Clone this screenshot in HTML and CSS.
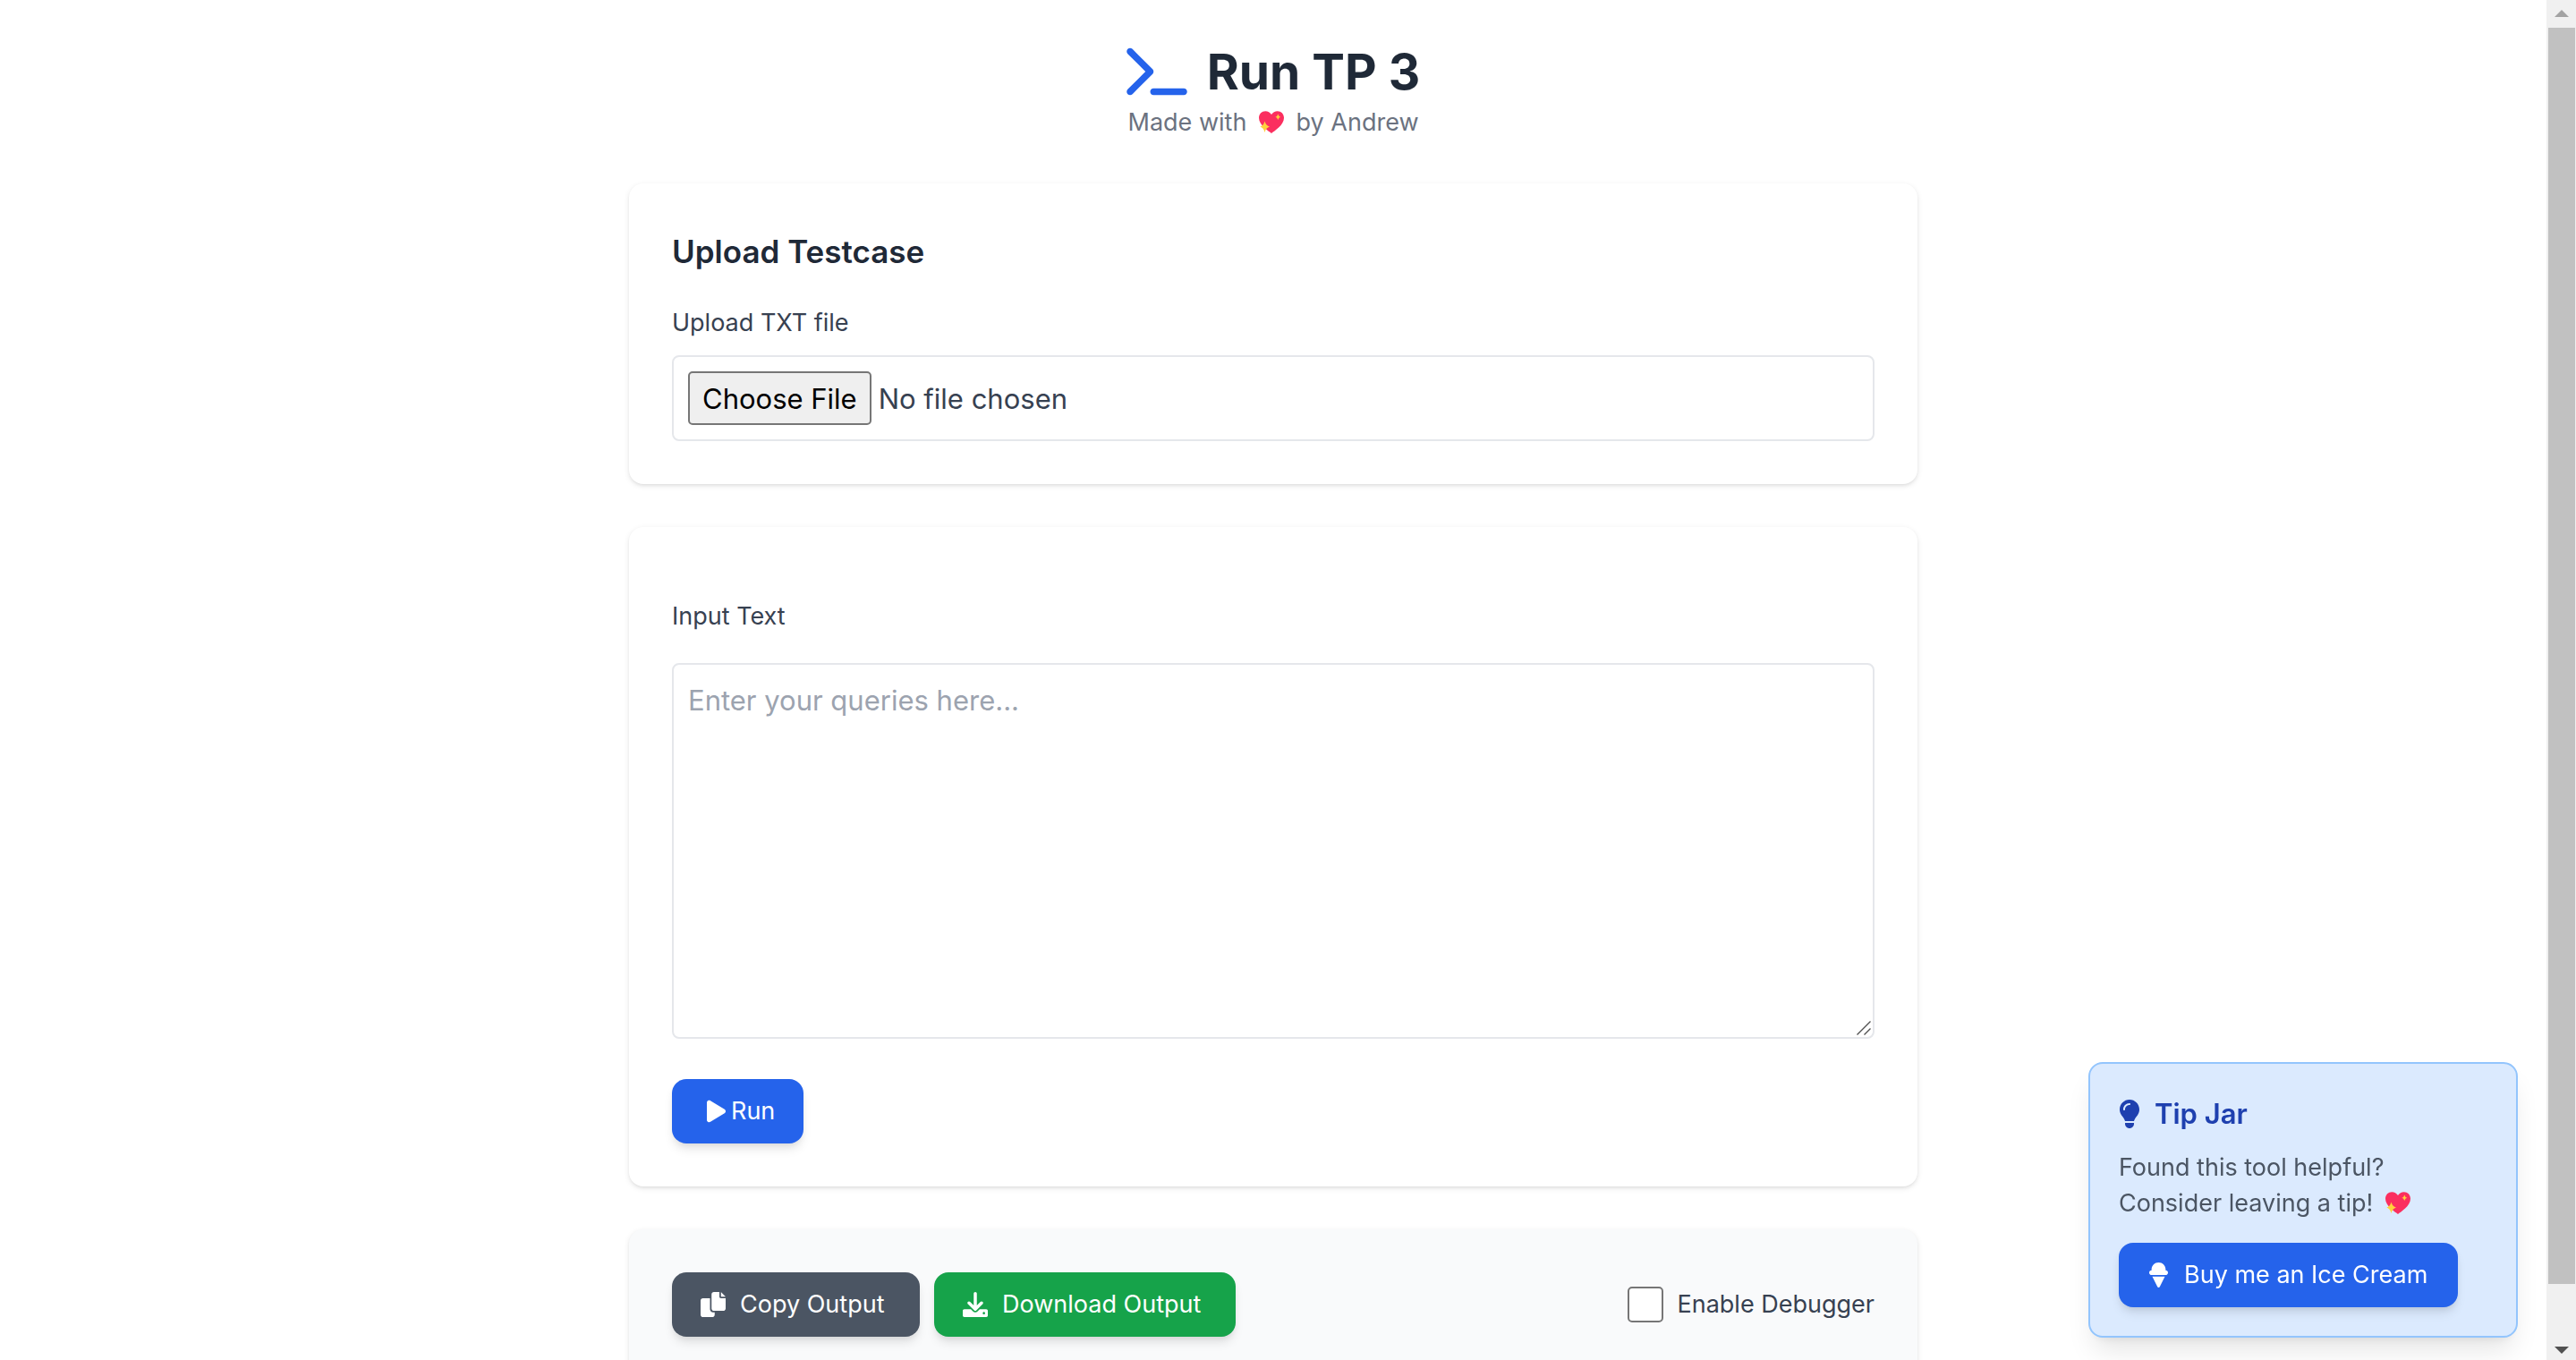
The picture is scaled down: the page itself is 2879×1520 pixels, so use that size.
FILE: index.html
```html
<!DOCTYPE html>
<html lang="en">
<head>
<meta charset="utf-8">
<title>Run TP 3</title>
<link rel="stylesheet" href="styles.css">
</head>
<body>
<svg class="sprite" aria-hidden="true">
  <symbol id="sparkling-heart" viewBox="0 0 28 25">
    <path fill="#fb2f5f" d="M14 25C11 22.600 0 16 0 7.800C0 3.400 3.200 .3 7.300 .3C10 .3 12.500 1.700 14 4C15.500 1.700 18 .3 20.700 .3C24.800 .3 28 3.400 28 7.800C28 16 17 22.600 14 25Z"/>
    <path fill="#ffd23c" d="M6.500 11.500Q7.800 16.300 12 17.600Q7.800 18.900 6.500 24Q5.200 18.900 1.400 17.600Q5.200 16.300 6.500 11.500ZM21.300 3.400Q22 6.100 24.200 6.700Q22 7.300 21.300 10Q20.600 7.300 18.400 6.700Q20.600 6.100 21.300 3.400Z"/>
  </symbol>
</svg>
<main class="page">
  <header class="header">
    <h1 class="title">
      <svg class="title-icon" viewBox="0 0 576 512" aria-hidden="true"><path d="M9.400 86.600C-3.100 74.100-3.100 53.900 9.400 41.400s32.800-12.500 45.300 0l192 192c12.500 12.500 12.500 32.800 0 45.300l-192 192c-12.500 12.500-32.800 12.500-45.300 0s-12.500-32.800 0-45.300L178.700 256 9.400 86.600zM256 416H544c17.700 0 32 14.300 32 32s-14.300 32-32 32H256c-17.700 0-32-14.300-32-32s14.300-32 32-32z"/></svg>
      Run TP 3
    </h1>
    <p class="subtitle">Made with <svg class="heart" role="img" aria-label="sparkling heart"><use href="#sparkling-heart"/></svg> by Andrew</p>
  </header>

  <section class="card">
    <h2 class="card-title">Upload Testcase</h2>
    <label class="label" for="testcase">Upload TXT file</label>
    <input class="file" type="file" id="testcase" accept=".txt">
  </section>

  <section class="card">
    <label class="label label-spaced" for="queries">Input Text</label>
    <div class="queries-box">
      <textarea class="queries" id="queries" placeholder="Enter your queries here..."></textarea>
      <svg class="grip" viewBox="0 0 16 16" aria-hidden="true"><path d="M.5 15.500L15.500 .5M8.500 15.500L15.500 8.500"/></svg>
    </div>
    <button class="button button-run" type="button">
      <svg class="icon-play" viewBox="0 0 384 512" aria-hidden="true"><path d="M73 39c-14.800-9.100-33.400-9.400-48.500-.9S0 62.600 0 80V432c0 17.400 9.400 33.400 24.500 41.900s33.700 8.100 48.500-.9L361 297c14.300-8.700 23-24.200 23-41s-8.700-32.200-23-41L73 39z"/></svg>
      Run
    </button>
  </section>

  <section class="card card-output">
    <div class="toolbar">
      <button class="button button-copy" type="button">
        <svg class="icon" viewBox="0 0 512 512" aria-hidden="true"><path d="M384 96L384 0h-112c-26.510 0-48 21.490-48 48v288c0 26.510 21.490 48 48 48H464c26.510 0 48-21.490 48-48V128h-95.100C398.400 128 384 113.600 384 96zM416 0v96h96L416 0zM192 352V128h-144c-26.510 0-48 21.490-48 48v288c0 26.510 21.490 48 48 48h192c26.510 0 48-21.490 48-48L288 416h-32C220.700 416 192 387.300 192 352z"/></svg>
        Copy Output
      </button>
      <button class="button button-download" type="button">
        <svg class="icon" viewBox="0 0 512 512" aria-hidden="true"><path d="M480 352h-133.500l-45.250 45.250C289.200 409.300 273.100 416 256 416s-33.160-6.656-45.250-18.750L165.500 352H32c-17.670 0-32 14.330-32 32v96c0 17.670 14.330 32 32 32h448c17.670 0 32-14.330 32-32v-96C512 366.300 497.700 352 480 352zM432 456c-13.200 0-24-10.800-24-24c0-13.200 10.800-24 24-24s24 10.800 24 24C456 445.200 445.200 456 432 456zM233.400 374.600C239.600 380.900 247.800 384 256 384s16.380-3.125 22.620-9.375l128-128c12.490-12.500 12.490-32.750 0-45.250c-12.500-12.500-32.760-12.500-45.250 0L288 274.800V32c0-17.670-14.330-32-32-32C238.300 0 224 14.330 224 32v242.800L150.600 201.400c-12.490-12.500-32.750-12.500-45.250 0c-12.490 12.500-12.490 32.750 0 45.250L233.400 374.600z"/></svg>
        Download Output
      </button>
      <label class="debugger"><input class="checkbox" type="checkbox">Enable Debugger</label>
    </div>
  </section>
</main>

<aside class="tip">
  <h3 class="tip-title">
    <svg class="tip-icon" viewBox="0 0 384 512" aria-hidden="true"><path d="M272 384c9.600-31.900 29.500-59.100 49.200-86.200l0 0c5.200-7.100 10.400-14.200 15.400-21.400c19.800-28.500 31.400-63 31.400-100.300C368 78.800 289.200 0 192 0S16 78.800 16 176c0 37.300 11.600 71.900 31.400 100.300c5 7.200 10.200 14.300 15.400 21.400l0 0c19.800 27.100 39.700 54.400 49.200 86.200H272zM192 512c44.200 0 80-35.800 80-80V416H112v16c0 44.200 35.800 80 80 80zM112 176c0 8.800-7.200 16-16 16s-16-7.200-16-16c0-61.900 50.100-112 112-112c8.800 0 16 7.200 16 16s-7.200 16-16 16c-44.200 0-80 35.800-80 80z"/></svg>
    Tip Jar
  </h3>
  <p class="tip-text">Found this tool helpful?<br>Consider leaving a tip! <svg class="heart heart-tip" role="img" aria-label="sparkling heart"><use href="#sparkling-heart"/></svg></p>
  <a class="button button-tip" href="#tip">
    <svg class="icon-cone" viewBox="0 0 448 512" aria-hidden="true"><path d="M367.100 160c.6-5.300 .9-10.600 .9-16C368 64.500 303.500 0 224 0S80 64.500 80 144c0 5.400 .3 10.700 .9 16H80c-26.500 0-48 21.500-48 48s21.500 48 48 48H368c26.500 0 48-21.500 48-48s-21.500-48-48-48h-.9zM96 288L200.800 497.700c4.400 8.800 13.300 14.300 23.200 14.300s18.800-5.500 23.200-14.300L352 288H96z"/></svg>
    Buy me an Ice Cream
  </a>
</aside>

<div class="scrollbar" aria-hidden="true">
  <span class="arrow arrow-up"></span>
  <span class="track"><span class="thumb"></span></span>
  <span class="arrow arrow-down"></span>
</div>
</body>
</html>
```
FILE: styles.css
```css
:root {
  --text-body: 27px;
  --text-input: 31px;
  --blue: #2563eb;
}

* { box-sizing: border-box; }

body {
  margin: 0;
  height: 100vh;
  overflow: hidden;
  padding-right: 33px;
  background: #fff;
  color: #374151;
  font-family: Inter, "Liberation Sans", sans-serif;
  font-size: var(--text-body);
  line-height: 40px;
}

h1, h2, h3, p { margin: 0; }

svg { flex: none; fill: currentColor; }

.sprite { position: absolute; width: 0; height: 0; }

.page {
  display: flex;
  flex-direction: column;
  gap: 48px;
  max-width: 1440px;
  margin: 0 auto;
  padding: 44px 0 48px;
}

.header { text-align: center; }

.title {
  display: flex;
  align-items: center;
  justify-content: center;
  gap: 22px;
  color: #1f2937;
  font-size: 55px;
  font-weight: 700;
  line-height: 72px;
}

.title-icon { width: 68px; height: 60px; color: var(--blue); }

.subtitle { color: #6b7280; line-height: 41px; }

.heart {
  width: 28px;
  height: 25px;
  margin: 0 6px;
  vertical-align: -3px;
}

.card {
  padding: 48px;
  border-radius: 16px;
  background: #fff;
  box-shadow: 0 2px 6px rgba(0, 0, 0, .1), 0 2px 4px -2px rgba(0, 0, 0, .1);
}

.card-output { min-height: 400px; background: #f9fafb; }

.card-title {
  margin-bottom: 32px;
  color: #1f2937;
  font-size: 35px;
  font-weight: 600;
  line-height: 56px;
}

.label { display: block; margin-bottom: 16px; }

.label-spaced { margin: 32px 0; }

.file, .queries {
  display: block;
  width: 100%;
  padding: 16px;
  border: 2px solid #e5e7eb;
  border-radius: 8px;
  background: #fff;
  color: #374151;
  font-family: inherit;
  font-size: var(--text-input);
}

.file { height: 96px; }

.file::file-selector-button {
  height: 60px;
  margin-right: 8px;
  padding: 0 14px;
  border: 2px solid #767676;
  border-radius: 5px;
  background: #efefef;
  color: #000;
  font: inherit;
}

.queries-box { position: relative; margin-bottom: 45px; }

.queries {
  height: 420px;
  line-height: 48px;
  resize: vertical;
}

.queries::placeholder { color: #9ca3af; }

.queries::-webkit-resizer { background: transparent; }

.grip {
  position: absolute;
  right: 4px;
  bottom: 4px;
  width: 16px;
  height: 16px;
  fill: none;
  stroke: #505050;
  stroke-width: 1.400;
  pointer-events: none;
}

.button {
  display: inline-flex;
  align-items: center;
  gap: 16px;
  height: 72px;
  padding: 0 32px;
  border: 0;
  border-radius: 16px;
  color: #fff;
  font: 400 var(--text-body)/40px Inter, "Liberation Sans", sans-serif;
  text-decoration: none;
  white-space: nowrap;
  box-shadow: 0 8px 12px -2px rgba(0, 0, 0, .1), 0 4px 8px -4px rgba(0, 0, 0, .1);
}

.button-run { display: flex; gap: 6px; padding-left: 39px; background: var(--blue); }
.button-copy { min-width: 277px; background: #4b5563; }
.button-download { min-width: 337px; background: #16a34a; }
.button-tip { min-width: 379px; background: var(--blue); }

.icon { width: 28px; height: 28px; }
.icon-play { width: 21px; height: 28px; }
.icon-cone { width: 25px; height: 28px; }

.toolbar { display: flex; align-items: center; gap: 16px; }

.debugger { display: flex; align-items: center; gap: 16px; margin-left: auto; }

.checkbox {
  appearance: none;
  width: 40px;
  height: 40px;
  margin: 0;
  border: 2px solid #767676;
  border-radius: 5px;
  background: #fff;
}

.checkbox:checked { background: var(--blue); }

.tip {
  position: fixed;
  right: 65px;
  bottom: 25px;
  width: 480px;
  padding: 32px;
  border: 2px solid #93c5fd;
  border-radius: 16px;
  background: #dbeafe;
  box-shadow: 0 20px 30px -6px rgba(0, 0, 0, .1), 0 8px 12px -8px rgba(0, 0, 0, .1);
}

.tip-title {
  display: flex;
  align-items: center;
  gap: 16px;
  margin-bottom: 16px;
  color: #1e40af;
  font-size: var(--text-input);
  font-weight: 600;
  line-height: 48px;
}

.tip-icon { width: 24px; height: 32px; }

.tip-text { margin-bottom: 24px; color: #4b5563; }

.heart-tip { margin: 0 6px; }

.scrollbar {
  position: fixed;
  top: 0;
  right: 0;
  bottom: 0;
  display: flex;
  flex-direction: column;
  align-items: center;
  width: 33px;
  padding: 11px 0 7px;
  background: #f0f0f0;
}

.arrow { border: 8px solid transparent; }
.arrow-up { border-top: 0; border-bottom-color: #a3a3a3; }
.arrow-down { border-bottom: 0; border-top-color: #505050; }

.track { flex: 1; width: 30px; margin: 12px 0; }

.thumb { display: block; height: 96%; background: #c1c1c1; }
```
